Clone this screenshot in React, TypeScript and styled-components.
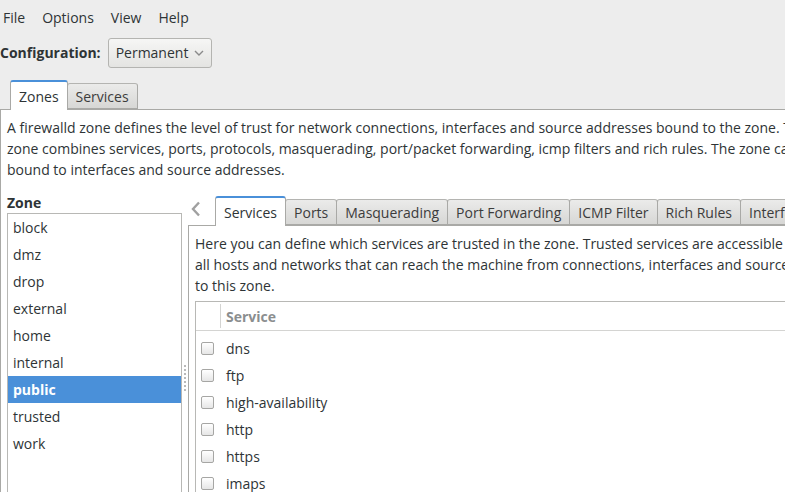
import * as React from 'react';
import styled, { createGlobalStyle } from 'styled-components';

const GlobalStyle = createGlobalStyle`
	html, body {
		margin: 0;
		padding: 0;
		background: #ededed;
		overflow: hidden;
	}
	body {
		font-family: 'Open Sans', 'DejaVu Sans', sans-serif;
		font-size: 14px;
		color: #2e3436;
	}
`;

const Window = styled.div`
	width: 785px;
	height: 492px;
	overflow: hidden;
	display: flex;
	flex-direction: column;
	background: #ededed;
	& > * {
		flex-shrink: 0;
	}
`;

const MenuBar = styled.div`
	display: flex;
	align-items: center;
	height: 35px;
	padding-left: 3px;
`;

const MenuItem = styled.span`
	margin-right: 17px;
`;

const ConfigRow = styled.div`
	display: flex;
	align-items: center;
	height: 35px;
`;

const ConfigLabel = styled.span`
	font-weight: 700;
`;

const Combo = styled.div`
	display: flex;
	align-items: center;
	gap: 6px;
	margin-left: 7px;
	padding: 0 7px;
	border: 1px solid #b4b4b1;
	border-radius: 3px;
	background: linear-gradient(#f6f6f5, #e4e4e2);
	box-sizing: border-box;
	height: 30px;
`;

const TabBar = styled.div<{ indent: number }>`
	display: flex;
	align-items: flex-end;
	height: 29px;
	margin-top: 10px;
	padding-left: ${({ indent }) => indent}px;
	flex: 0 0 auto;
`;

const Tab = styled.div<{ active?: boolean }>`
	display: flex;
	align-items: center;
	box-sizing: border-box;
	padding: 0 8px;
	height: ${({ active }) => (active ? 30 : 26)}px;
	margin-bottom: ${({ active }) => (active ? -1 : 0)}px;
	border: 1px solid #a9a9a6;
	border-bottom: ${({ active }) => (active ? 'none' : '1px solid #a9a9a6')};
	border-top: ${({ active }) => (active ? '2px solid #4a90d9' : '1px solid #b4b4b1')};
	border-radius: 3px 3px 0 0;
	margin-right: -1px;
	background: ${({ active }) => (active ? '#ffffff' : 'linear-gradient(#ebebea, #d7d7d5)')};
	color: ${({ active }) => (active ? '#2e3436' : '#3c3c3c')};
	white-space: nowrap;
	position: relative;
	z-index: ${({ active }) => (active ? 2 : 1)};
`;

const Notebook = styled.div`
	flex: 1 0 auto;
	background: #ffffff;
	border-top: 1px solid #a9a9a6;
	border-left: 1px solid #a9a9a6;
	display: flex;
	flex-direction: column;
`;

const Description = styled.div<{ pad: string }>`
	flex: 0 0 auto;
	padding: ${({ pad }) => pad};
	line-height: 21px;
	white-space: nowrap;
`;

const Line = styled.div``;

const Split = styled.div`
	display: flex;
	flex: 1 0 auto;
	padding-top: 13px;
`;

const ZoneColumn = styled.div`
	flex: 0 0 175px;
	margin-left: 6px;
	display: flex;
	flex-direction: column;
`;

const ZoneLabel = styled.div`
	font-weight: 700;
	line-height: 20px;
`;

const ZoneList = styled.div`
	flex: 1 0 auto;
	border: 1px solid #b8b8b5;
	border-bottom: none;
	background: #ffffff;
`;

const ZoneRow = styled.div<{ selected?: boolean }>`
	height: 27px;
	line-height: 27px;
	padding-left: 5px;
	background: ${({ selected }) => (selected ? '#4a90d9' : 'transparent')};
	color: ${({ selected }) => (selected ? '#ffffff' : '#2e3436')};
	font-weight: ${({ selected }) => (selected ? 700 : 400)};
`;

const Handle = styled.div`
	flex: 0 0 6px;
	display: flex;
	justify-content: center;
`;

const Grip = styled.div`
	margin-top: 172px;
	width: 2px;
	height: 26px;
	background: repeating-linear-gradient(#b9b9b9 0 2px, transparent 2px 4px);
`;

const DetailColumn = styled.div`
	flex: 1 1 0;
	display: flex;
	flex-direction: column;
	min-width: 0;
`;

const DetailTabs = styled.div`
	flex: 0 0 32px;
	display: flex;
	align-items: flex-end;
	padding-left: 3px;
`;

const Scroller = styled.div`
	flex: 0 0 24px;
	height: 30px;
	display: flex;
	align-items: flex-start;
	padding: 6px 0 0 0;
	box-sizing: border-box;
`;

const DetailPanel = styled.div`
	flex: 1 0 auto;
	background: #ffffff;
	border-top: 1px solid #a9a9a6;
	border-left: 1px solid #a9a9a6;
	display: flex;
	flex-direction: column;
`;

const Tree = styled.div`
	flex: 1 0 auto;
	margin: 5px 0 0 6px;
	border: 1px solid #b8b8b5;
	border-right: none;
	border-bottom: none;
`;

const TreeHeader = styled.div`
	display: flex;
	height: 28px;
	border-bottom: 1px solid #d4d4d2;
`;

const HeaderCell = styled.div<{ w?: number }>`
	display: flex;
	align-items: center;
	${({ w }) => (w ? `width: ${w}px;` : 'flex: 1 1 auto;')}
	padding-left: 5px;
	border-left: ${({ w }) => (w ? 'none' : '1px solid #d4d4d2')};
	color: #8b8e8f;
	font-weight: 700;
	margin: 2px 0;
`;

const TreeBody = styled.div`
	padding-top: 4px;
`;

const ServiceRow = styled.div`
	display: flex;
	align-items: center;
	height: 27px;
`;

const Check = styled.span`
	display: inline-block;
	width: 11px;
	height: 11px;
	margin: 0 12px 0 5px;
	border: 1px solid #a6a6a4;
	border-radius: 2px;
	background: linear-gradient(#ffffff, #e6e6e6);
`;

const zones = ['block', 'dmz', 'drop', 'external', 'home', 'internal', 'public', 'trusted', 'work'];
const services = ['dns', 'ftp', 'high-availability', 'http', 'https', 'imaps'];
const detailTabs = ['Services', 'Ports', 'Masquerading', 'Port Forwarding', 'ICMP Filter', 'Rich Rules', 'Interfaces'];

const App = () => (
	<>
		<GlobalStyle />
		<Window>
			<MenuBar>
				<MenuItem>File</MenuItem>
				<MenuItem>Options</MenuItem>
				<MenuItem>View</MenuItem>
				<MenuItem>Help</MenuItem>
			</MenuBar>
			<ConfigRow>
				<ConfigLabel>Configuration:</ConfigLabel>
				<Combo>
					Permanent
					<svg width="10" height="6" viewBox="0 0 10 6">
						<path d="M1 1 L5 5 L9 1" fill="none" stroke="#8a8a8a" strokeWidth="1.4" />
					</svg>
				</Combo>
			</ConfigRow>
			<TabBar indent={10}>
				<Tab active>Zones</Tab>
				<Tab>Services</Tab>
			</TabBar>
			<Notebook>
				<Description pad="7px 0 0 6px">
					<Line>A firewalld zone defines the level of trust for network connections, interfaces and source addresses bound to the zone. The</Line>
					<Line>zone combines services, ports, protocols, masquerading, port/packet forwarding, icmp filters and rich rules. The zone can be</Line>
					<Line>bound to interfaces and source addresses.</Line>
				</Description>
				<Split>
					<ZoneColumn>
						<ZoneLabel>Zone</ZoneLabel>
						<ZoneList>
							{zones.map((z) => (
								<ZoneRow key={z} selected={z === 'public'}>
									{z}
								</ZoneRow>
							))}
						</ZoneList>
					</ZoneColumn>
					<Handle>
						<Grip />
					</Handle>
					<DetailColumn>
						<DetailTabs>
							<Scroller>
								<svg width="10" height="16" viewBox="0 0 10 16">
									<path d="M8 1.5 L2 8 L8 14.5" fill="none" stroke="#a0a0a0" strokeWidth="2.4" />
								</svg>
							</Scroller>
							{detailTabs.map((t, i) => (
								<Tab key={t} active={i === 0}>
									{t}
								</Tab>
							))}
						</DetailTabs>
						<DetailPanel>
							<Description pad="7px 0 0 6px">
								<Line>Here you can define which services are trusted in the zone. Trusted services are accessible from</Line>
								<Line>all hosts and networks that can reach the machine from connections, interfaces and sources bound</Line>
								<Line>to this zone.</Line>
							</Description>
							<Tree>
								<TreeHeader>
									<HeaderCell w={19} />
									<HeaderCell>Service</HeaderCell>
								</TreeHeader>
								<TreeBody>
									{services.map((s) => (
										<ServiceRow key={s}>
											<Check />
											{s}
										</ServiceRow>
									))}
								</TreeBody>
							</Tree>
						</DetailPanel>
					</DetailColumn>
				</Split>
			</Notebook>
		</Window>
	</>
);

export default App;
